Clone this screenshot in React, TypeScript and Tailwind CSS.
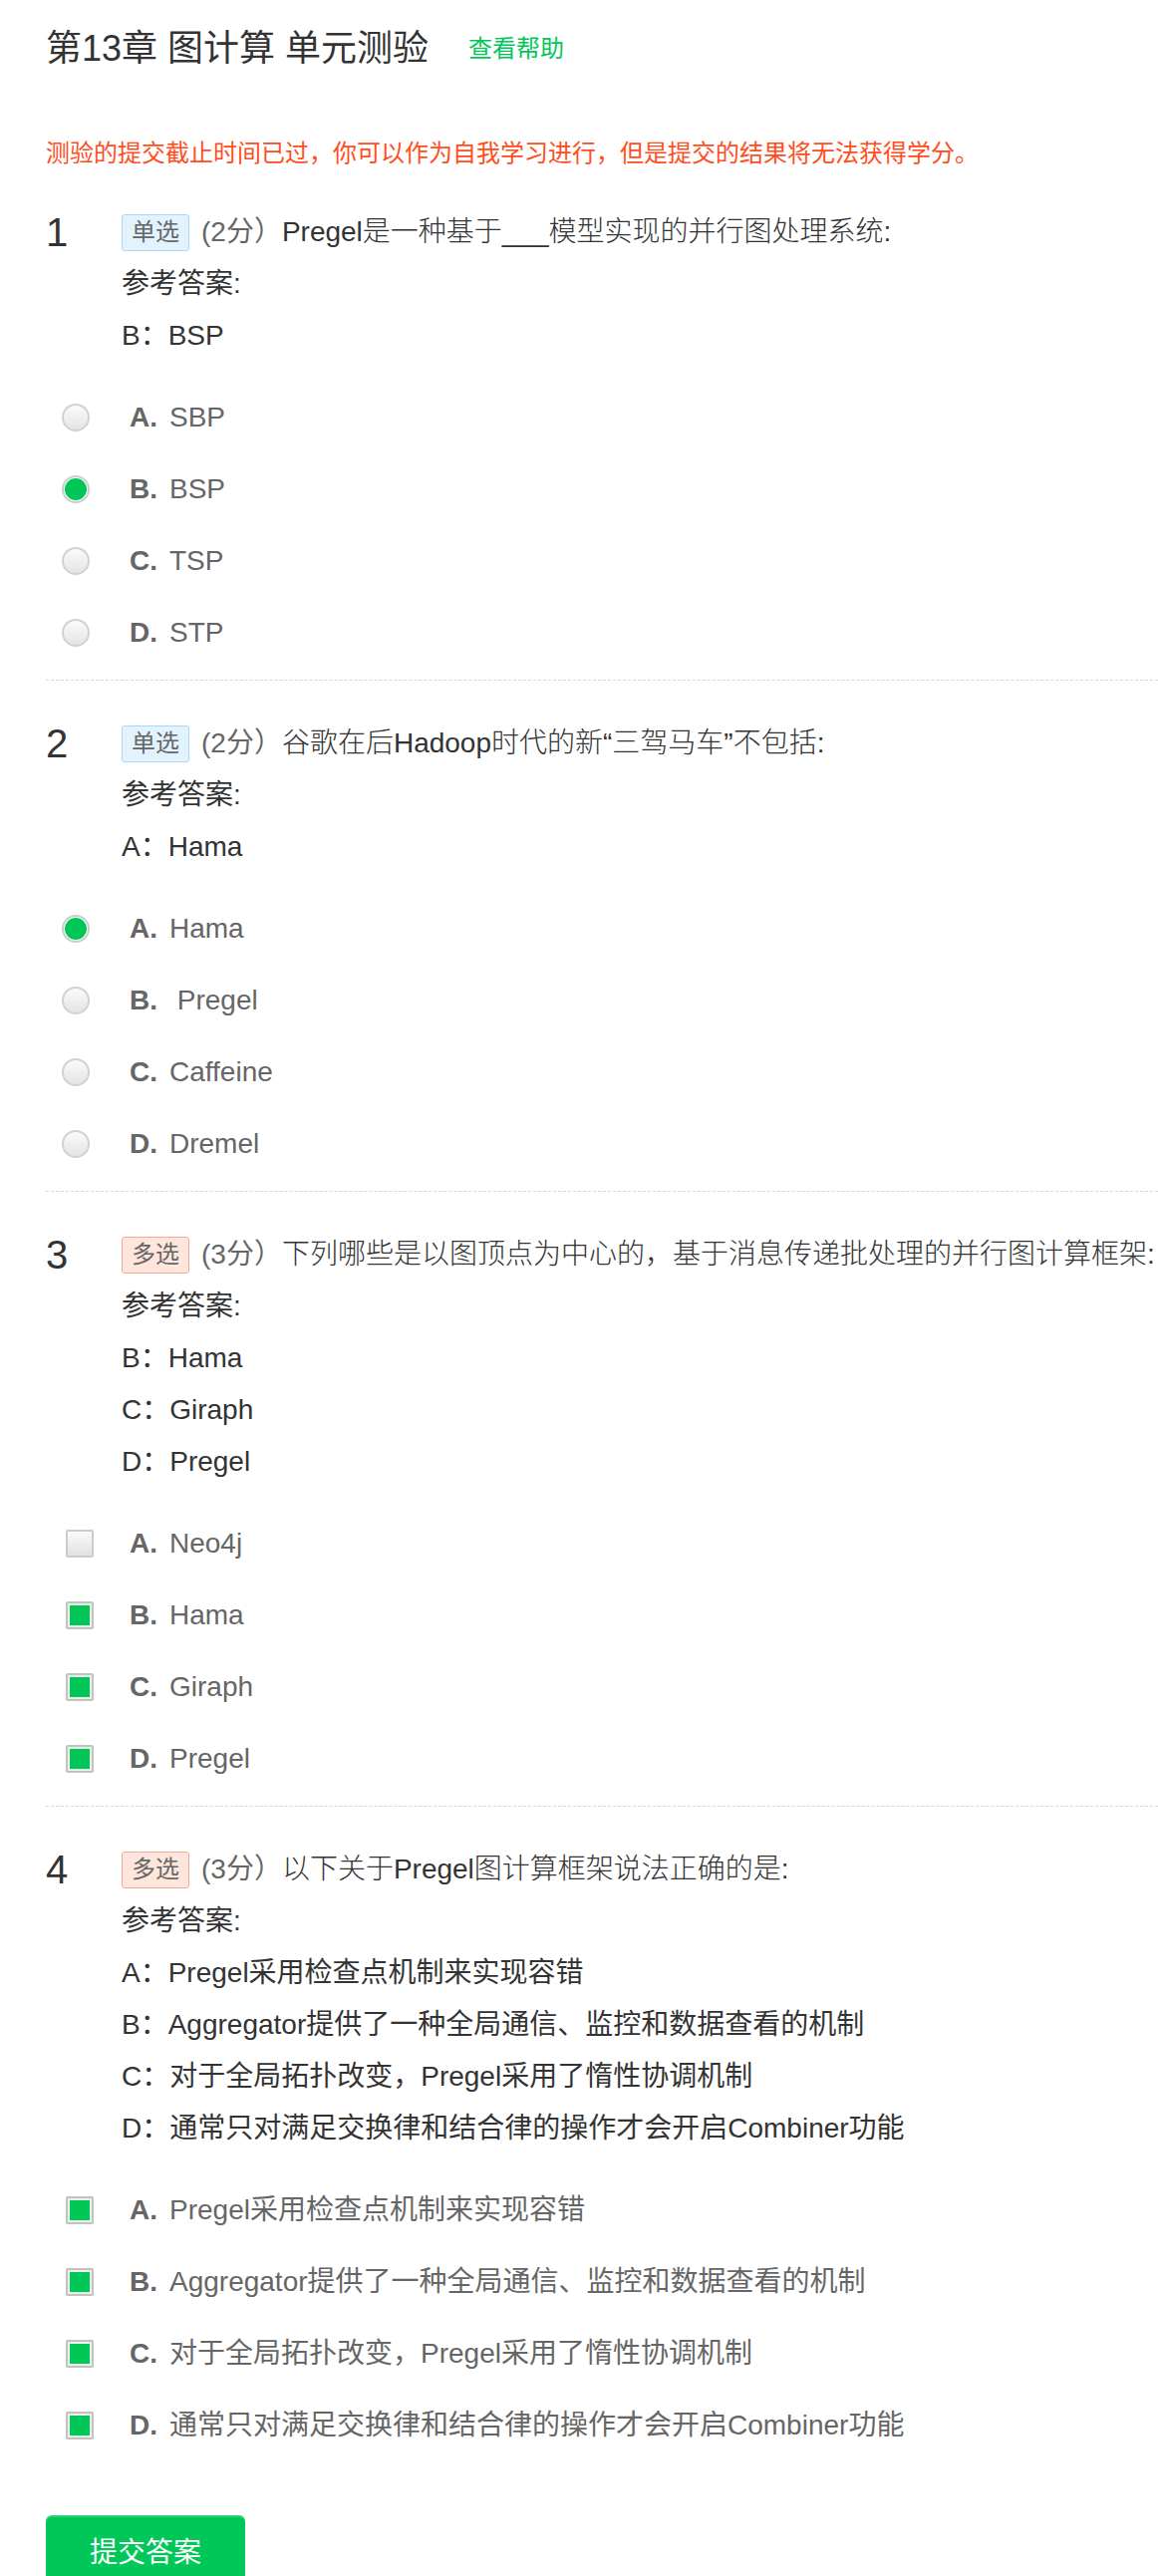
import React from "react";

type Opt = { label: string; text: string; checked: boolean };
type Q = {
  num: number;
  type: "单选" | "多选";
  score: string;
  text: React.ReactNode;
  answers: string[];
  options: Opt[];
};

const questions: Q[] = [
  {
    num: 1,
    type: "单选",
    score: "(2分）",
    text: "Pregel是一种基于___模型实现的并行图处理系统:",
    answers: ["B：BSP"],
    options: [
      { label: "A.", text: "SBP", checked: false },
      { label: "B.", text: "BSP", checked: true },
      { label: "C.", text: "TSP", checked: false },
      { label: "D.", text: "STP", checked: false },
    ],
  },
  {
    num: 2,
    type: "单选",
    score: "(2分）",
    text: "谷歌在后Hadoop时代的新“三驾马车”不包括:",
    answers: ["A：Hama"],
    options: [
      { label: "A.", text: "Hama", checked: true },
      { label: "B.", text: "\u00a0Pregel", checked: false },
      { label: "C.", text: "Caffeine", checked: false },
      { label: "D.", text: "Dremel", checked: false },
    ],
  },
  {
    num: 3,
    type: "多选",
    score: "(3分）",
    text: "下列哪些是以图顶点为中心的，基于消息传递批处理的并行图计算框架:",
    answers: ["B：Hama", "C：Giraph", "D：Pregel"],
    options: [
      { label: "A.", text: "Neo4j", checked: false },
      { label: "B.", text: "Hama", checked: true },
      { label: "C.", text: "Giraph", checked: true },
      { label: "D.", text: "Pregel", checked: true },
    ],
  },
  {
    num: 4,
    type: "多选",
    score: "(3分）",
    text: "以下关于Pregel图计算框架说法正确的是:",
    answers: [
      "A：Pregel采用检查点机制来实现容错",
      "B：Aggregator提供了一种全局通信、监控和数据查看的机制",
      "C：对于全局拓扑改变，Pregel采用了惰性协调机制",
      "D：通常只对满足交换律和结合律的操作才会开启Combiner功能",
    ],
    options: [
      { label: "A.", text: "Pregel采用检查点机制来实现容错", checked: true },
      { label: "B.", text: "Aggregator提供了一种全局通信、监控和数据查看的机制", checked: true },
      { label: "C.", text: "对于全局拓扑改变，Pregel采用了惰性协调机制", checked: true },
      { label: "D.", text: "通常只对满足交换律和结合律的操作才会开启Combiner功能", checked: true },
    ],
  },
];

function Radio({ checked }: { checked: boolean }) {
  if (checked) {
    return (
      <div className="w-[28px] h-[28px] rounded-full border-2 border-[#cdcdcd] bg-white p-[1px] shrink-0">
        <div className="w-full h-full rounded-full bg-[#00c758]" />
      </div>
    );
  }
  return (
    <div className="w-[28px] h-[28px] rounded-full border-2 border-[#d2d2d2] bg-linear-to-b from-[#fbfbfb] to-[#e4e4e4] shrink-0" />
  );
}

function Checkbox({ checked }: { checked: boolean }) {
  if (checked) {
    return (
      <div className="w-[28px] h-[28px] rounded-[2px] border-2 border-[#c2c2c2] bg-[#eaf3e8] p-[2px] shrink-0">
        <div className="w-full h-full bg-[#00c758]" />
      </div>
    );
  }
  return (
    <div className="w-[28px] h-[28px] rounded-[2px] border-2 border-[#cccccc] bg-linear-to-b from-[#fafafa] to-[#e2e2e2] shrink-0" />
  );
}

function Question({ q, last }: { q: Q; last: boolean }) {
  const multi = q.type === "多选";
  return (
    <section>
      <div className="flex">
        <div className="w-[76px] h-[52px] leading-[52px] text-[40px] text-[#333] shrink-0">{q.num}</div>
        <div className="flex flex-col">
          <div className="h-[52px] flex items-center whitespace-nowrap">
            <span
              className={
                multi
                  ? "h-[37px] px-[9px] flex items-center rounded-[3px] border border-[#f7ad94] bg-[#ffe6dc] text-[24px] text-[#666]"
                  : "h-[37px] px-[9px] flex items-center rounded-[3px] border border-[#a9d8f7] bg-[#e2f3fe] text-[24px] text-[#666]"
              }
            >
              {q.type}
            </span>
            <span className="ml-[12px] text-[28px] text-[#666]">{q.score}</span>
            <span className="text-[28px] text-[#333] font-light">{q.text}</span>
          </div>
          <div className="h-[52px] leading-[52px] text-[28px] text-[#333]">参考答案:</div>
          {q.answers.map((a) => (
            <div key={a} className="h-[52px] leading-[52px] text-[28px] text-[#333] whitespace-nowrap">
              {a}
            </div>
          ))}
        </div>
      </div>
      <div className="mt-[20px] flex flex-col">
        {q.options.map((o) => (
          <div
            key={o.label}
            className={multi ? "h-[72px] flex items-center pl-[20px]" : "h-[72px] flex items-center pl-[16px]"}
          >
            {multi ? <Checkbox checked={o.checked} /> : <Radio checked={o.checked} />}
            <span
              className={
                multi
                  ? "ml-[36px] w-[40px] text-[28px] font-bold text-[#666] shrink-0"
                  : "ml-[40px] w-[40px] text-[28px] font-bold text-[#666] shrink-0"
              }
            >
              {o.label}
            </span>
            <span className="text-[28px] text-[#666] whitespace-nowrap">{o.text}</span>
          </div>
        ))}
      </div>
      {!last && (
        <div className="mt-[11px] mb-[37px] border-t border-dashed border-[#d6d6d6]" />
      )}
    </section>
  );
}

export default function App() {
  return (
    <div className="h-[2585px] overflow-hidden bg-white pl-[46px] font-[family-name:'Liberation_Sans','Noto_Sans_CJK_SC',sans-serif]">
      <div className="h-[98px] flex items-center">
        <h1 className="text-[36px] text-[#333] font-normal">第13章 图计算 单元测验</h1>
        <a className="ml-[40px] text-[24px] text-[#00c758]">查看帮助</a>
      </div>
      <div className="mt-[32px] h-[48px] leading-[48px] text-[24px] text-[#ff4d1c]">
        测验的提交截止时间已过，你可以作为自我学习进行，但是提交的结果将无法获得学分。
      </div>
      <div className="mt-[29px]">
        {questions.map((q, i) => (
          <Question key={q.num} q={q} last={i === questions.length - 1} />
        ))}
      </div>
      <button className="mt-[54px] w-[200px] h-[76px] rounded-t-[6px] bg-[#00c758] text-white text-[28px] shadow-[inset_0_2px_0_rgba(255,255,255,0.18)]">
        提交答案
      </button>
    </div>
  );
}
